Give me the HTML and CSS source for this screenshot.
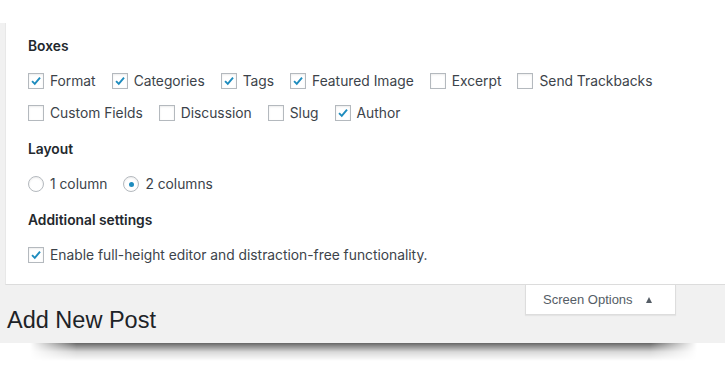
FILE: index.html
```html
<!DOCTYPE html>
<html lang="en">
<head>
    <meta charset="UTF-8">
    <meta name="viewport" content="width=device-width, initial-scale=1.0">
    <title>Add New Post</title>
    <link rel="stylesheet" href="styles.css">
</head>
<body>
    <div class="top"></div>

    <div class="wrap">
        <div class="screen-meta">
            <h3>Boxes</h3>
            <div class="options">
                <label class="opt"><span class="box checked"><svg viewBox="0 0 16 16"><path d="M3.5 8.2 L6.6 11.3 L12.6 4.2"/></svg></span>Format</label>
                <label class="opt"><span class="box checked"><svg viewBox="0 0 16 16"><path d="M3.5 8.2 L6.6 11.3 L12.6 4.2"/></svg></span>Categories</label>
                <label class="opt"><span class="box checked"><svg viewBox="0 0 16 16"><path d="M3.5 8.2 L6.6 11.3 L12.6 4.2"/></svg></span>Tags</label>
                <label class="opt"><span class="box checked"><svg viewBox="0 0 16 16"><path d="M3.5 8.2 L6.6 11.3 L12.6 4.2"/></svg></span>Featured Image</label>
                <label class="opt"><span class="box"></span>Excerpt</label>
                <label class="opt"><span class="box"></span>Send Trackbacks</label>
                <label class="opt"><span class="box"></span>Custom Fields</label>
                <label class="opt"><span class="box"></span>Discussion</label>
                <label class="opt"><span class="box"></span>Slug</label>
                <label class="opt"><span class="box checked"><svg viewBox="0 0 16 16"><path d="M3.5 8.2 L6.6 11.3 L12.6 4.2"/></svg></span>Author</label>
            </div>

            <h3>Layout</h3>
            <div class="options">
                <label class="opt"><span class="radio"></span>1 column</label>
                <label class="opt"><span class="radio on"></span>2 columns</label>
            </div>

            <h3>Additional settings</h3>
            <div class="options last">
                <label class="opt"><span class="box checked"><svg viewBox="0 0 16 16"><path d="M3.5 8.2 L6.6 11.3 L12.6 4.2"/></svg></span>Enable full-height editor and distraction-free functionality.</label>
            </div>
        </div>

        <div class="page-head">
            <button class="screen-tab">Screen Options <span class="arrow"></span></button>
            <h1>Add New Post</h1>
        </div>
    </div>
    <div class="shadow"></div>
</body>
</html>
```

FILE: styles.css
```css
* {
    margin: 0;
    padding: 0;
    box-sizing: border-box;
}

body {
    font-family: Inter, "Liberation Sans", Arial, sans-serif;
    background: #fff;
    color: #3c434a;
    font-size: 13.8px;
    line-height: 20px;
}

.top {
    height: 23px;
}

.wrap {
    background: #f1f1f1;
    padding-left: 5px;
}

.screen-meta {
    background: #fff;
    border-left: 1px solid #e8e8e8;
    border-bottom: 1px solid #dcdcdc;
    padding: 13px 0 19px 22px;
}

.screen-meta h3 {
    font-size: 13.8px;
    font-weight: 600;
    color: #23282d;
    margin-bottom: 15px;
}

.options {
    display: flex;
    flex-wrap: wrap;
    column-gap: 16px;
    row-gap: 12px;
    margin-bottom: 16px;
}

.options.last {
    margin-bottom: 0;
}

.opt {
    display: flex;
    align-items: center;
    gap: 6px;
    height: 20px;
}

.box {
    width: 16px;
    height: 16px;
    border: 1px solid #b4b9be;
    background: #fff;
    box-shadow: inset 0 1px 2px rgba(0,0,0,0.08);
    display: block;
}

.box svg {
    display: block;
    width: 14px;
    height: 14px;
}

.box path {
    fill: none;
    stroke: #1e8cbe;
    stroke-width: 2.2;
}

.radio {
    width: 16px;
    height: 16px;
    border: 1px solid #b4b9be;
    border-radius: 50%;
    box-shadow: inset 0 1px 2px rgba(0,0,0,0.08);
    display: flex;
    align-items: center;
    justify-content: center;
}

.radio.on::before {
    content: "";
    width: 5px;
    height: 5px;
    border-radius: 50%;
    background: #1e8cbe;
}

.page-head {
    height: 58px;
}

.screen-tab {
    float: right;
    margin-right: 49px;
    width: 151px;
    height: 30px;
    background: #fff;
    border: 1px solid #ddd;
    border-top: none;
    box-shadow: 0 1px 1px rgba(0,0,0,0.05);
    font-family: "Liberation Sans", Arial, sans-serif;
    font-size: 13px;
    color: #555d66;
    display: flex;
    align-items: center;
    gap: 13px;
    padding-left: 17px;
}

.arrow {
    width: 0;
    height: 0;
    border-left: 3.5px solid transparent;
    border-right: 3.5px solid transparent;
    border-bottom: 6px solid #555d66;
}

h1 {
    font-family: "Liberation Sans", Arial, sans-serif;
    font-size: 23.5px;
    font-weight: 400;
    line-height: 29px;
    color: #1d2327;
    padding-top: 21px;
    margin-left: 2px;
}

.shadow {
    height: 18px;
    margin: 0 28px 0 30px;
    background: linear-gradient(rgba(0,0,0,0.6), rgba(0,0,0,0.15) 50%, rgba(0,0,0,0));
    -webkit-mask-image: linear-gradient(90deg, transparent, #000 7%, #000 93%, transparent);
    mask-image: linear-gradient(90deg, transparent, #000 7%, #000 93%, transparent);
}
```
